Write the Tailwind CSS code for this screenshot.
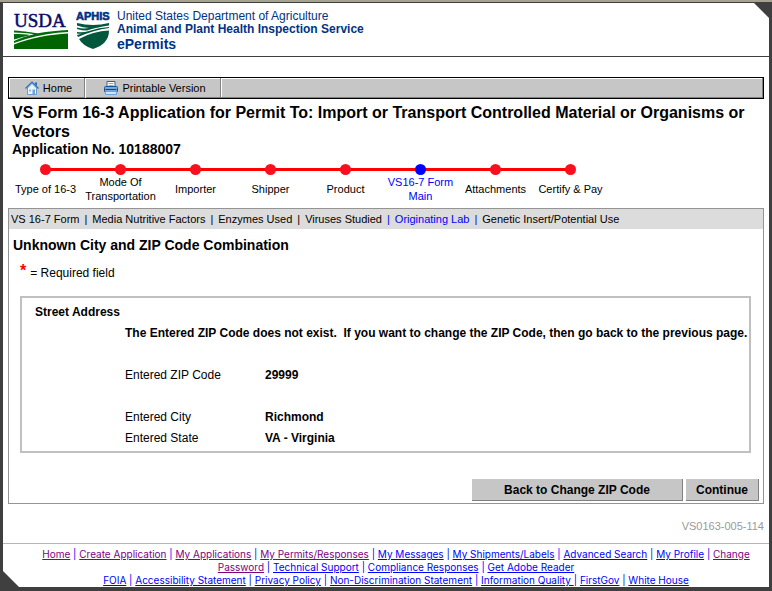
<!DOCTYPE html>
<html lang="en">
<head>
<meta charset="utf-8">
<meta name="viewport" content="width=device-width, initial-scale=1">
<title>ePermits - Unknown City and ZIP Code Combination</title>
<script src="https://cdn.jsdelivr.net/npm/@tailwindcss/browser@4"></script>
</head>
<body class="bg-[#3f3f3f] font-['Liberation_Sans',Arial,sans-serif] text-black">
<div class="flex min-h-screen flex-col border-t-2 border-[#a5a291]">
<div class="relative mx-[3px] mt-px mb-1 flex grow flex-col bg-white">
  <svg class="absolute top-0 right-0 size-[15px]" viewBox="0 0 15 15" aria-hidden="true"><path d="M0 0H15V15Z" fill="#3f3f3f"/></svg>
  <svg class="absolute bottom-0 left-0 size-4" viewBox="0 0 16 16" aria-hidden="true"><path d="M0 0L16 16H0Z" fill="#3f3f3f"/></svg>

  <header class="flex h-[54px] border-b border-[#3f3f3f] pt-[7px] pl-[11px]">
    <svg class="mt-px h-[39px] w-[54px] shrink-0 overflow-visible" viewBox="0 0 54 39" role="img" aria-label="USDA">
      <text x="0" y="16" font-family="Liberation Serif, serif" font-size="19" fill="#0b0b66" stroke="#0b0b66" stroke-width=".5">USDA</text>
      <path d="M0 19.500C12 20.500 18 21.500 24 22.300C34 20.500 44 19.500 54 19V21C40 21.500 26 24 12 28L0 32V30C6 27.500 14 24.500 20 23.300C14 22.300 7 21.500 0 21.500Z" fill="#006b0b"/>
      <path d="M0 23C6 23 12 23.300 16 24C10 25.500 5 27 0 28.500Z" fill="#006b0b"/>
      <path d="M0 33.500C18 26.500 36 23.500 54 22.500V38H0Z" fill="#006400"/>
    </svg>
    <svg class="mt-px ml-2 h-[39px] w-[34px] shrink-0" viewBox="0 0 34 39" role="img" aria-label="APHIS">
      <text x="0" y="9" font-family="Liberation Sans, sans-serif" font-size="11" font-weight="700" fill="#003384" stroke="#003384" stroke-width=".6">APHIS</text>
      <path d="M1 12Q17 16 33 12V14.500Q20 16.500 11 19.500Q6 19.500 1 18V16.500Q7 18 13 17Q7 16.500 1 14.500Z" fill="#00573b"/>
      <path d="M1 21Q7 22 13 20Q23 16.500 33 16V17Q18 19 2 26L1 24Q5 22.800 7 22.500Q4 23 1 22.500Z" fill="#00573b"/>
      <path d="M3 28Q17 20 33 19.500Q33 33 17 38Q7 35 3 28Z" fill="#00573b"/>
    </svg>
    <div class="ml-[7px] whitespace-nowrap text-[#003384]">
      <p class="text-[12px] leading-[13px]">United States Department of Agriculture</p>
      <p class="text-[12px] leading-[13px] font-bold">Animal and Plant Health Inspection Service</p>
      <p class="text-[14px] leading-4 font-bold">ePermits</p>
    </div>
  </header>

  <main class="mx-[5px] mt-5">
    <nav class="flex h-[22px] border border-black bg-[#c6c6c6] text-[11px] shadow-[inset_-1px_-1px_#808080,inset_1px_1px_#fff]" aria-label="Page tools">
      <a href="#" class="flex w-[76px] items-center justify-center gap-1 border-r border-[#808080] pl-1">
        <svg class="size-[14px]" viewBox="0 0 14 14" aria-hidden="true"><path d="M2.500 7V13.500H11.500V7L7 2.500Z" fill="#e8f3fd" stroke="#6a9bcb"/><path d="M10 1.500H12V5L10 3Z" fill="#2f66a5"/><path d="M.5 7.500L7 1L13.500 7.500" fill="none" stroke="#2f6fb5" stroke-width="1.200"/><path d="M4 8.500H6V10.500H4Z" fill="#8bb8e2"/><path d="M7.500 8.500H10V13.500H7.500Z" fill="#6fa3d6"/></svg>
        Home
      </a>
      <a href="#" class="flex w-[136px] items-center justify-center gap-1 border-r border-l border-r-[#808080] border-l-white pl-1">
        <svg class="size-[14px]" viewBox="0 0 14 14" aria-hidden="true"><path d="M3 6V.5H11V6" fill="#fff" stroke="#2f6097"/><path d="M4.500 2.500H9.500M4.500 4.500H9.500" stroke="#86aad0"/><path d="M.5 6.500Q.5 5.500 1.500 5.500H12.500Q13.500 5.500 13.500 6.500V10.500H.5Z" fill="#75a9de" stroke="#1f5590"/><path d="M1.500 8.500H12.500" stroke="#164477"/><path d="M1.500 10.500H12.500V13.500H1.500Z" fill="#cfe5fa" stroke="#6fa3d6"/></svg>
        Printable Version
      </a>
      <span class="my-px border-l border-white"></span>
    </nav>

    <div class="mt-1 ml-1">
      <h1 class="text-[16px] leading-[19px] font-bold">VS Form 16-3 Application for Permit To: Import or Transport Controlled Material or Organisms or Vectors</h1>
      <p class="text-[14px] leading-4 font-bold">Application No. 10188007</p>
    </div>

    <ol class="relative mt-[7px] grid w-[600px] grid-cols-8 text-center text-[11px] leading-[14px]">
      <li class="absolute inset-x-[37px] top-1 h-[3px] bg-[#ff0000]" aria-hidden="true"></li>
      <li class="relative flex flex-col items-center"><span class="size-[11px] rounded-full bg-[#fa0f1e]"></span><span class="flex h-7 items-center">Type of 16-3</span></li>
      <li class="relative flex flex-col items-center"><span class="size-[11px] rounded-full bg-[#fa0f1e]"></span><span class="flex h-7 items-center">Mode Of<br>Transportation</span></li>
      <li class="relative flex flex-col items-center"><span class="size-[11px] rounded-full bg-[#fa0f1e]"></span><span class="flex h-7 items-center">Importer</span></li>
      <li class="relative flex flex-col items-center"><span class="size-[11px] rounded-full bg-[#fa0f1e]"></span><span class="flex h-7 items-center">Shipper</span></li>
      <li class="relative flex flex-col items-center"><span class="size-[11px] rounded-full bg-[#fa0f1e]"></span><span class="flex h-7 items-center">Product</span></li>
      <li class="relative flex flex-col items-center text-[#0000ff]" aria-current="step"><span class="size-[11px] rounded-full bg-[#0000ff]"></span><span class="flex h-7 items-center">VS16-7 Form<br>Main</span></li>
      <li class="relative flex flex-col items-center"><span class="size-[11px] rounded-full bg-[#fa0f1e]"></span><span class="flex h-7 items-center">Attachments</span></li>
      <li class="relative flex flex-col items-center"><span class="size-[11px] rounded-full bg-[#fa0f1e]"></span><span class="flex h-7 items-center">Certify &amp; Pay</span></li>
    </ol>

    <section class="mt-[5px] border border-[#949494]">
      <nav class="flex h-5 items-center gap-[5px] bg-[#dcdcdc] pl-0.5 text-[11px] whitespace-nowrap" aria-label="Form sections">
        <a href="#">VS 16-7 Form</a><span>|</span>
        <a href="#">Media Nutritive Factors</a><span>|</span>
        <a href="#">Enzymes Used</a><span>|</span>
        <a href="#">Viruses Studied</a><span class="text-[#0000ff]">|</span>
        <a href="#" class="text-[#0000ff]">Originating Lab</a><span class="text-[#0000ff]">|</span>
        <a href="#">Genetic Insert/Potential Use</a>
      </nav>
      <h2 class="mt-2 ml-1 text-[14px] leading-4 font-bold">Unknown City and ZIP Code Combination</h2>
      <p class="mt-2.5 ml-[11px] flex items-center gap-1 text-[12px] leading-4"><span class="pb-1 text-[16px] font-bold text-[#ff0000]">*</span> = Required field</p>

      <div class="mt-[13px] mr-3 ml-[11px] border-2 border-[#c0c0c0] pt-1 pb-0.5 pl-[13px] text-[12px] leading-[21px]">
        <h3 class="font-bold">Street Address</h3>
        <p class="pl-[90px] font-bold">The Entered ZIP Code does not exist.&nbsp; If you want to change the ZIP Code, then go back to the previous page.</p>
        <dl class="mt-[21px] grid grid-cols-[140px_1fr] pl-[90px]">
          <dt class="pb-[21px]">Entered ZIP Code</dt><dd class="font-bold">29999</dd>
          <dt>Entered City</dt><dd class="font-bold">Richmond</dd>
          <dt>Entered State</dt><dd class="font-bold">VA - Virginia</dd>
        </dl>
      </div>

      <div class="mt-[26px] mr-1 mb-0.5 flex justify-end gap-[3px] text-[12px] font-bold">
        <button type="button" class="h-[22px] w-[211px] border-r border-b border-[#808080] bg-[#c6c6c6]">Back to Change ZIP Code</button>
        <button type="button" class="h-[22px] w-[73px] border-r border-b border-[#808080] bg-[#c6c6c6]">Continue</button>
      </div>
    </section>
    <p class="mt-4 text-right text-[11px] leading-[13px] text-[#999999]">VS0163-005-114</p>
  </main>

  <footer class="mt-2.5 border-t border-[#b5b5b5] pt-1 pl-5 text-center font-[Inter,'Liberation_Sans',sans-serif] text-[10px] leading-[13px] whitespace-nowrap text-[#0000ff]">
    <p>
      <a href="#" class="text-[#800080] underline">Home</a> |
      <a href="#" class="text-[#800080] underline">Create Application</a> |
      <a href="#" class="text-[#800080] underline">My Applications</a> |
      <a href="#" class="text-[#800080] underline">My Permits/Responses</a> |
      <a href="#" class="underline">My Messages</a> |
      <a href="#" class="underline">My Shipments/Labels</a> |
      <a href="#" class="underline">Advanced Search</a> |
      <a href="#" class="underline">My Profile</a> |
      <a href="#" class="text-[#800080] underline">Change<br>Password</a> |
      <a href="#" class="underline">Technical Support</a> |
      <a href="#" class="underline">Compliance Responses</a> |
      <a href="#" class="underline">Get Adobe Reader</a>
    </p>
    <p>
      <a href="#" class="underline">FOIA</a> |
      <a href="#" class="underline">Accessibility Statement</a> |
      <a href="#" class="underline">Privacy Policy</a> |
      <a href="#" class="underline">Non-Discrimination Statement</a> |
      <a href="#" class="underline">Information Quality </a>|
      <a href="#" class="underline">FirstGov</a> |
      <a href="#" class="underline">White House</a>
    </p>
  </footer>
</div>
</div>
</body>
</html>
